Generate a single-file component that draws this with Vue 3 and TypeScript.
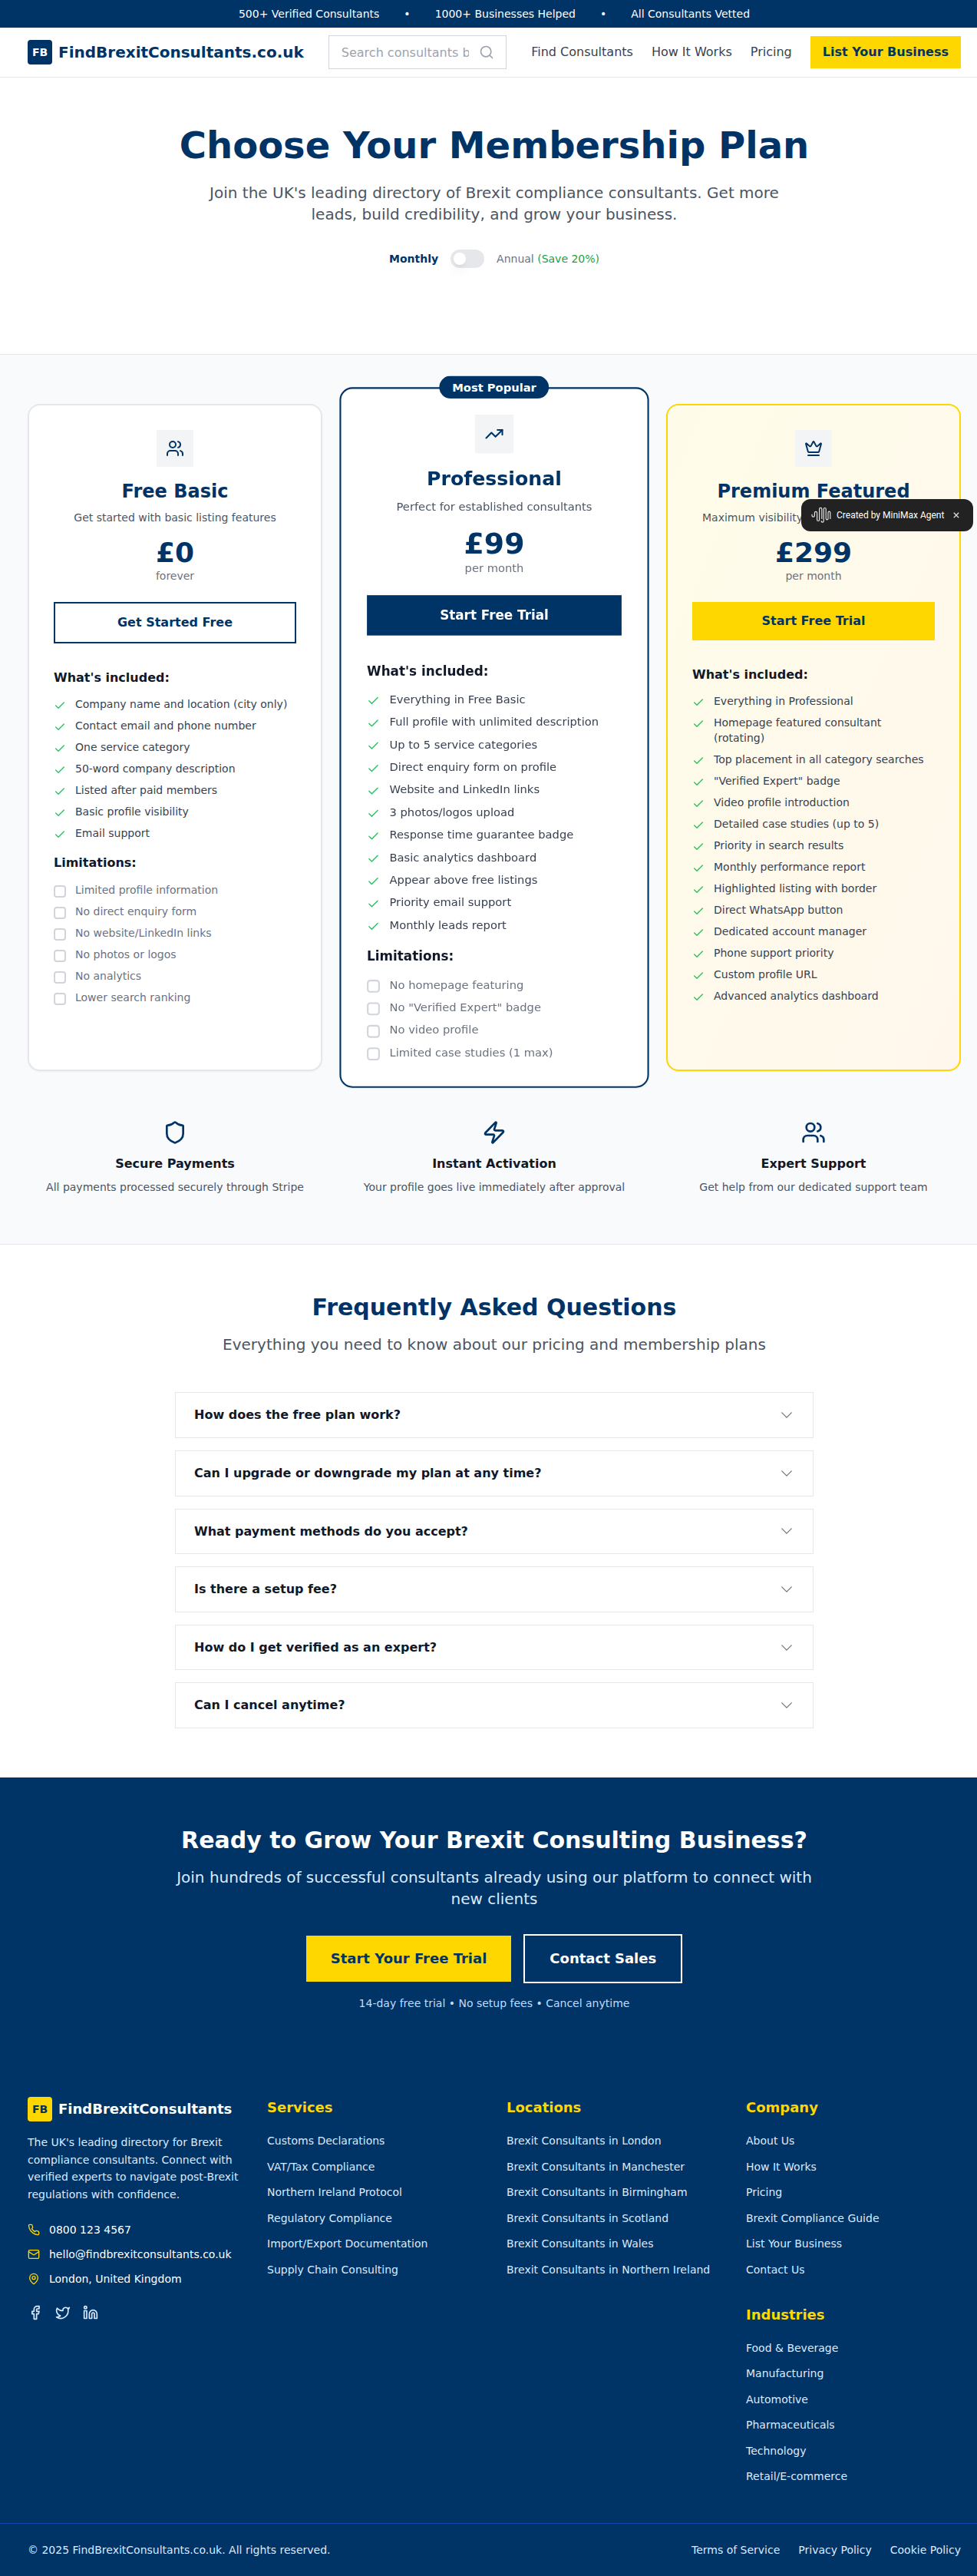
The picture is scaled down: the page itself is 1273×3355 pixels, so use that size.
<script setup lang="ts">
import { ref } from 'vue'

interface Plan {
  name: string
  tagline: string
  price: string
  period: string
  cta: string
  variant: 'basic' | 'pro' | 'premium'
  icon: string
  features: string[]
  limits: string[]
}

const icons: Record<string, string[]> = {
  search: ['M3 11a8 8 0 1 0 16 0a8 8 0 1 0-16 0', 'm21 21-4.3-4.3'],
  users: [
    'M16 21v-2a4 4 0 0 0-4-4H6a4 4 0 0 0-4 4v2',
    'M5 7a4 4 0 1 0 8 0a4 4 0 1 0-8 0',
    'M22 21v-2a4 4 0 0 0-3-3.87',
    'M16 3.13a4 4 0 0 1 0 7.75',
  ],
  trending: ['M22 7l-8.5 8.5-5-5L2 17', 'M16 7h6v6'],
  crown: [
    'M11.562 3.266a.5.5 0 0 1 .876 0L15.39 8.87a1 1 0 0 0 1.516.294L21.183 5.5a.5.5 0 0 1 .798.519l-2.834 10.246a1 1 0 0 1-.956.734H5.81a1 1 0 0 1-.957-.734L2.02 6.02a.5.5 0 0 1 .798-.519l4.276 3.664a1 1 0 0 0 1.516-.294z',
    'M5 21h14',
  ],
  check: ['M20 6 9 17l-5-5'],
  shield: [
    'M20 13c0 5-3.5 7.5-7.66 8.95a1 1 0 0 1-.67-.01C7.5 20.5 4 18 4 13V6a1 1 0 0 1 1-1c2 0 4.5-1.2 6.24-2.72a1.17 1.17 0 0 1 1.52 0C14.51 3.81 17 5 19 5a1 1 0 0 1 1 1z',
  ],
  zap: [
    'M4 14a1 1 0 0 1-.78-1.63l9.9-10.2a.5.5 0 0 1 .86.46l-1.92 6.02A1 1 0 0 0 13 10h7a1 1 0 0 1 .78 1.63l-9.9 10.2a.5.5 0 0 1-.86-.46l1.92-6.02A1 1 0 0 0 11 14z',
  ],
  chevron: ['m19.5 8.25-7.5 7.5-7.5-7.5'],
  phone: [
    'M22 16.92v3a2 2 0 0 1-2.18 2 19.79 19.79 0 0 1-8.63-3.07 19.5 19.5 0 0 1-6-6 19.79 19.79 0 0 1-3.07-8.67A2 2 0 0 1 4.11 2h3a2 2 0 0 1 2 1.72 12.84 12.84 0 0 0 .7 2.81 2 2 0 0 1-.45 2.11L8.09 9.91a16 16 0 0 0 6 6l1.27-1.27a2 2 0 0 1 2.11-.45 12.84 12.84 0 0 0 2.81.7A2 2 0 0 1 22 16.92z',
  ],
  mail: [
    'M4 4h16a2 2 0 0 1 2 2v12a2 2 0 0 1-2 2H4a2 2 0 0 1-2-2V6a2 2 0 0 1 2-2z',
    'm22 7-8.97 5.7a1.94 1.94 0 0 1-2.06 0L2 7',
  ],
  pin: [
    'M20 10c0 4.993-5.539 10.193-7.399 11.799a1 1 0 0 1-1.202 0C9.539 20.193 4 14.993 4 10a8 8 0 0 1 16 0',
    'M9 10a3 3 0 1 0 6 0a3 3 0 1 0-6 0',
  ],
  facebook: ['M18 2h-3a5 5 0 0 0-5 5v3H7v4h3v8h4v-8h3l1-4h-4V7a1 1 0 0 1 1-1h3z'],
  twitter: [
    'M22 4s-.7 2.1-2 3.4c1.6 10-9.4 17.3-18 11.6 2.2.1 4.4-.6 6-2C3 15.5.5 9.6 3 5c2.2 2.6 5.6 4.1 9 4-.9-4.2 4-6.6 7-3.8 1.1 0 3-1.2 3-1.2z',
  ],
  linkedin: [
    'M16 8a6 6 0 0 1 6 6v7h-4v-7a2 2 0 0 0-2-2 2 2 0 0 0-2 2v7h-4v-7a6 6 0 0 1 6-6z',
    'M2 9h4v12H2z',
    'M2 4a2 2 0 1 0 4 0a2 2 0 1 0-4 0',
  ],
}

const plans: Plan[] = [
  {
    name: 'Free Basic',
    tagline: 'Get started with basic listing features',
    price: '£0',
    period: 'forever',
    cta: 'Get Started Free',
    variant: 'basic',
    icon: 'users',
    features: [
      'Company name and location (city only)',
      'Contact email and phone number',
      'One service category',
      '50-word company description',
      'Listed after paid members',
      'Basic profile visibility',
      'Email support',
    ],
    limits: [
      'Limited profile information',
      'No direct enquiry form',
      'No website/LinkedIn links',
      'No photos or logos',
      'No analytics',
      'Lower search ranking',
    ],
  },
  {
    name: 'Professional',
    tagline: 'Perfect for established consultants',
    price: '£99',
    period: 'per month',
    cta: 'Start Free Trial',
    variant: 'pro',
    icon: 'trending',
    features: [
      'Everything in Free Basic',
      'Full profile with unlimited description',
      'Up to 5 service categories',
      'Direct enquiry form on profile',
      'Website and LinkedIn links',
      '3 photos/logos upload',
      'Response time guarantee badge',
      'Basic analytics dashboard',
      'Appear above free listings',
      'Priority email support',
      'Monthly leads report',
    ],
    limits: [
      'No homepage featuring',
      'No "Verified Expert" badge',
      'No video profile',
      'Limited case studies (1 max)',
    ],
  },
  {
    name: 'Premium Featured',
    tagline: 'Maximum visibility for expert consultants',
    price: '£299',
    period: 'per month',
    cta: 'Start Free Trial',
    variant: 'premium',
    icon: 'crown',
    features: [
      'Everything in Professional',
      'Homepage featured consultant (rotating)',
      'Top placement in all category searches',
      '"Verified Expert" badge',
      'Video profile introduction',
      'Detailed case studies (up to 5)',
      'Priority in search results',
      'Monthly performance report',
      'Highlighted listing with border',
      'Direct WhatsApp button',
      'Dedicated account manager',
      'Phone support priority',
      'Custom profile URL',
      'Advanced analytics dashboard',
    ],
    limits: [],
  },
]

const perks = [
  { icon: 'shield', title: 'Secure Payments', text: 'All payments processed securely through Stripe' },
  { icon: 'zap', title: 'Instant Activation', text: 'Your profile goes live immediately after approval' },
  { icon: 'users', title: 'Expert Support', text: 'Get help from our dedicated support team' },
]

const questions = [
  'How does the free plan work?',
  'Can I upgrade or downgrade my plan at any time?',
  'What payment methods do you accept?',
  'Is there a setup fee?',
  'How do I get verified as an expert?',
  'Can I cancel anytime?',
]

const contacts = [
  { icon: 'phone', text: '0800 123 4567' },
  { icon: 'mail', text: 'hello@findbrexitconsultants.co.uk' },
  { icon: 'pin', text: 'London, United Kingdom' },
]

const footerColumns = [
  [
    {
      title: 'Services',
      links: [
        'Customs Declarations',
        'VAT/Tax Compliance',
        'Northern Ireland Protocol',
        'Regulatory Compliance',
        'Import/Export Documentation',
        'Supply Chain Consulting',
      ],
    },
  ],
  [
    {
      title: 'Locations',
      links: ['London', 'Manchester', 'Birmingham', 'Scotland', 'Wales', 'Northern Ireland'].map(
        (place) => `Brexit Consultants in ${place}`,
      ),
    },
  ],
  [
    {
      title: 'Company',
      links: ['About Us', 'How It Works', 'Pricing', 'Brexit Compliance Guide', 'List Your Business', 'Contact Us'],
    },
    {
      title: 'Industries',
      links: ['Food & Beverage', 'Manufacturing', 'Automotive', 'Pharmaceuticals', 'Technology', 'Retail/E-commerce'],
    },
  ],
]

const annual = ref(false)
const toastOpen = ref(true)
</script>

<template>
  <div class="viewport">
    <div class="page">
      <div class="topbar">
        <span>500+ Verified Consultants</span>
        <span>•</span>
        <span>1000+ Businesses Helped</span>
        <span>•</span>
        <span>All Consultants Vetted</span>
      </div>

      <header class="header">
        <div class="container header-row">
          <a class="logo">
            <span class="logo-mark">FB</span>
            <span class="logo-name">FindBrexitConsultants.co.uk</span>
          </a>
          <div class="search">
            <input type="text" placeholder="Search consultants by service, location..." />
            <svg class="ico s20" viewBox="0 0 24 24"><path v-for="d in icons.search" :key="d" :d="d" /></svg>
          </div>
          <nav class="nav">
            <a>Find Consultants</a>
            <a>How It Works</a>
            <a>Pricing</a>
            <a class="nav-cta">List Your Business</a>
          </nav>
        </div>
      </header>

      <section class="hero">
        <h1>Choose Your Membership Plan</h1>
        <p>
          Join the UK's leading directory of Brexit compliance consultants. Get more leads, build credibility, and grow
          your business.
        </p>
        <div class="billing">
          <span :class="{ active: !annual }">Monthly</span>
          <button class="toggle" :class="{ on: annual }" aria-label="Billing period" @click="annual = !annual">
            <i></i>
          </button>
          <span :class="{ active: annual }">Annual <em>(Save 20%)</em></span>
        </div>
      </section>

      <section class="pricing">
        <div class="container">
          <div class="grid3">
            <article v-for="plan in plans" :key="plan.name" class="card" :class="plan.variant">
              <div v-if="plan.variant === 'pro'" class="badge">Most Popular</div>
              <div class="card-head">
                <div class="card-icon">
                  <svg class="ico s24" viewBox="0 0 24 24"><path v-for="d in icons[plan.icon]" :key="d" :d="d" /></svg>
                </div>
                <h3>{{ plan.name }}</h3>
                <p class="tagline">{{ plan.tagline }}</p>
                <div class="price">{{ plan.price }}</div>
                <div class="period">{{ plan.period }}</div>
              </div>
              <button class="card-cta">{{ plan.cta }}</button>
              <h4>What's included:</h4>
              <ul class="list">
                <li v-for="f in plan.features" :key="f">
                  <svg class="ico s16 tick" viewBox="0 0 24 24"><path :d="icons.check[0]" /></svg>
                  <span>{{ f }}</span>
                </li>
              </ul>
              <template v-if="plan.limits.length">
                <h4 class="limits-title">Limitations:</h4>
                <ul class="list limits">
                  <li v-for="l in plan.limits" :key="l">
                    <i class="box"></i>
                    <span>{{ l }}</span>
                  </li>
                </ul>
              </template>
            </article>
          </div>

          <div class="grid3 perks">
            <div v-for="perk in perks" :key="perk.title" class="perk">
              <svg class="ico s32" viewBox="0 0 24 24"><path v-for="d in icons[perk.icon]" :key="d" :d="d" /></svg>
              <h4>{{ perk.title }}</h4>
              <p>{{ perk.text }}</p>
            </div>
          </div>
        </div>
      </section>

      <section class="faq">
        <h2>Frequently Asked Questions</h2>
        <p class="faq-lead">Everything you need to know about our pricing and membership plans</p>
        <div class="faq-list">
          <button v-for="q in questions" :key="q" class="faq-item">
            <span>{{ q }}</span>
            <svg class="ico s20" viewBox="0 0 24 24"><path :d="icons.chevron[0]" /></svg>
          </button>
        </div>
      </section>

      <section class="cta">
        <div class="cta-inner">
          <h2>Ready to Grow Your Brexit Consulting Business?</h2>
          <p class="cta-lead">
            Join hundreds of successful consultants already using our platform to connect with new clients
          </p>
          <div class="cta-buttons">
            <button class="btn-yellow">Start Your Free Trial</button>
            <button class="btn-outline">Contact Sales</button>
          </div>
          <p class="cta-note">14-day free trial • No setup fees • Cancel anytime</p>
        </div>
      </section>

      <footer class="footer">
        <div class="container footer-grid">
          <div>
            <div class="footer-logo">
              <span class="logo-mark yellow">FB</span>
              <span>FindBrexitConsultants</span>
            </div>
            <p class="about">
              The UK's leading directory for Brexit compliance consultants. Connect with verified experts to navigate
              post-Brexit regulations with confidence.
            </p>
            <ul class="contacts">
              <li v-for="c in contacts" :key="c.text">
                <svg class="ico s16" viewBox="0 0 24 24"><path v-for="d in icons[c.icon]" :key="d" :d="d" /></svg>
                <span>{{ c.text }}</span>
              </li>
            </ul>
            <div class="social">
              <svg v-for="s in ['facebook', 'twitter', 'linkedin']" :key="s" class="ico s20" viewBox="0 0 24 24">
                <path v-for="d in icons[s]" :key="d" :d="d" />
              </svg>
            </div>
          </div>
          <div v-for="(column, i) in footerColumns" :key="i" class="footer-col">
            <div v-for="group in column" :key="group.title">
              <h3>{{ group.title }}</h3>
              <ul>
                <li v-for="link in group.links" :key="link"><a>{{ link }}</a></li>
              </ul>
            </div>
          </div>
        </div>
        <div class="legal">
          <div class="container legal-row">
            <span>© 2025 FindBrexitConsultants.co.uk. All rights reserved.</span>
            <div class="legal-links">
              <a>Terms of Service</a>
              <a>Privacy Policy</a>
              <a>Cookie Policy</a>
            </div>
          </div>
        </div>
      </footer>

      <div v-if="toastOpen" class="toast">
        <svg class="wave" width="26" height="22" viewBox="0 0 26 22">
          <path
            d="M1 10.2v1.3a1.7 1.7 0 0 0 3.4 0V8a1.6 1.6 0 0 1 3.2 0v9a1.5 1.5 0 0 0 3 0V3a1.6 1.6 0 0 1 3.2 0v12.5M13.2 18.5a1.5 1.5 0 0 0 3 .3V3a1.5 1.5 0 0 1 3 0v12.5a1.4 1.4 0 0 0 2.8 0V7.5a1.4 1.4 0 0 1 2.8 0v8"
          />
        </svg>
        <span>Created by MiniMax Agent</span>
        <button aria-label="Close" @click="toastOpen = false">
          <svg width="8" height="8" viewBox="0 0 8 8"><path d="M.8.8l6.4 6.4M7.2.8L.8 7.2" /></svg>
        </button>
      </div>
    </div>
  </div>
</template>

<style>
html,
body {
  margin: 0;
  overflow: hidden;
  background: #fff;
}
</style>

<style scoped>
.viewport {
  width: 100%;
  overflow: hidden;
}
.page,
.page * {
  box-sizing: border-box;
}
.page {
  position: relative;
  width: 1288px;
  font-family: 'DejaVu Sans', sans-serif;
  font-size: 16px;
  line-height: 1.6;
  color: #111827;
  background: #fff;
}
h1,
h2,
h3,
h4,
p,
ul {
  margin: 0;
  padding: 0;
  list-style: none;
}
button,
input {
  font: inherit;
  color: inherit;
  border: 0;
  margin: 0;
  padding: 0;
  border-radius: 0;
  background: none;
}
.container {
  max-width: 1280px;
  margin: 0 auto;
  padding: 0 32px;
}
.ico {
  display: block;
  flex: none;
  fill: none;
  stroke: currentColor;
  stroke-width: 2;
  stroke-linecap: round;
  stroke-linejoin: round;
}
.s16 {
  width: 16px;
  height: 16px;
}
.s20 {
  width: 20px;
  height: 20px;
}
.s24 {
  width: 24px;
  height: 24px;
}
.s32 {
  width: 32px;
  height: 32px;
}

.topbar {
  display: flex;
  justify-content: center;
  gap: 32px;
  padding: 8px 0;
  background: #003366;
  color: #fff;
  font-size: 14px;
  line-height: 20px;
}

.header {
  border-bottom: 1px solid #e5e7eb;
}
.header-row {
  display: flex;
  align-items: center;
  height: 64px;
}
.logo {
  display: flex;
  align-items: center;
  gap: 8px;
}
.logo-mark {
  display: flex;
  align-items: center;
  justify-content: center;
  width: 32px;
  height: 32px;
  border-radius: 4px;
  background: #003366;
  color: #fff;
  font-size: 14px;
  line-height: 20px;
  font-weight: 700;
}
.logo-mark.yellow {
  background: #ffd700;
  color: #003366;
}
.logo-name {
  font-size: 20px;
  line-height: 28px;
  font-weight: 700;
  color: #003366;
}
.search {
  position: relative;
  flex: 1;
  min-width: 0;
  margin: 0 32px;
}
.search input {
  display: block;
  width: 100%;
  height: 43.6px;
  padding: 8px 48px 8px 16px;
  border: 1px solid #d1d5db;
}
.search input::placeholder {
  color: #9ca3af;
  opacity: 1;
}
.search svg {
  position: absolute;
  right: 16px;
  top: 12px;
  color: #9ca3af;
}
.nav {
  display: flex;
  align-items: center;
  gap: 24px;
  color: #374151;
  white-space: nowrap;
}
.nav-cta {
  padding: 8px 16px;
  background: #ffd700;
  color: #003366;
  font-weight: 600;
}

.hero {
  padding: 64px 0 48px;
  text-align: center;
}
.hero h1 {
  font-size: 48px;
  line-height: 48px;
  font-weight: 700;
  color: #003366;
}
.hero p {
  max-width: 768px;
  margin: 24px auto 32px;
  font-size: 20px;
  line-height: 28px;
  color: #4b5563;
}
.billing {
  display: flex;
  align-items: center;
  justify-content: center;
  gap: 16px;
  margin-bottom: 64px;
  font-size: 14px;
  line-height: 20px;
  color: #6b7280;
}
.billing .active {
  color: #003366;
  font-weight: 600;
}
.billing em {
  font-style: normal;
  color: #16a34a;
}
.toggle {
  width: 44px;
  height: 24px;
  padding: 4px;
  border-radius: 12px;
  background: #e5e7eb;
}
.toggle i {
  display: block;
  width: 16px;
  height: 16px;
  border-radius: 50%;
  background: #fff;
  box-shadow: 0 10px 15px -3px rgba(0, 0, 0, 0.1), 0 4px 6px -4px rgba(0, 0, 0, 0.1);
}
.toggle.on {
  background: #003366;
}
.toggle.on i {
  margin-left: 20px;
}

.pricing {
  padding: 64px 0;
  background: #f9fafb;
  border-top: 1px solid #e5e7eb;
  border-bottom: 1px solid #e5e7eb;
}
.grid3 {
  display: grid;
  grid-template-columns: repeat(3, 1fr);
  gap: 32px;
}
.card {
  position: relative;
  padding: 32px;
  border: 2px solid #e5e7eb;
  border-radius: 16px;
  background: #fff;
  box-shadow: 0 1px 2px rgba(0, 0, 0, 0.05);
}
.card.pro {
  border-color: #003366;
  transform: scale(1.05);
}
.card.premium {
  border-color: #ffd700;
  background: linear-gradient(to bottom right, #fefce8, #fff7ed);
}
.badge {
  position: absolute;
  top: -16px;
  left: 50%;
  transform: translateX(-50%);
  padding: 4px 16px;
  border-radius: 14px;
  background: #003366;
  color: #fff;
  font-size: 14px;
  line-height: 20px;
  font-weight: 600;
  white-space: nowrap;
}
.card-head {
  text-align: center;
  margin-bottom: 24px;
}
.card-icon {
  display: flex;
  align-items: center;
  justify-content: center;
  width: 48px;
  height: 48px;
  margin: 0 auto 16px;
  background: #f3f4f6;
  color: #003366;
}
.card h3 {
  font-size: 24px;
  line-height: 32px;
  font-weight: 700;
  color: #003366;
}
.tagline {
  margin: 8px 0 16px;
  font-size: 14px;
  line-height: 20px;
  color: #4b5563;
  white-space: nowrap;
}
.price {
  font-size: 36px;
  line-height: 40px;
  font-weight: 700;
  color: #003366;
}
.period {
  font-size: 14px;
  line-height: 20px;
  color: #6b7280;
}
.card-cta {
  display: block;
  width: 100%;
  margin-bottom: 32px;
  padding: 12px 24px;
  font-weight: 600;
  text-align: center;
}
.basic .card-cta {
  border: 2px solid #003366;
  background: #fff;
  color: #003366;
}
.pro .card-cta {
  background: #003366;
  color: #fff;
}
.premium .card-cta {
  background: #ffd700;
  color: #003366;
}
.card h4 {
  margin-bottom: 12px;
  font-size: 16px;
  font-weight: 600;
}
.card h4.limits-title {
  margin-top: 16px;
}
.list {
  display: flex;
  flex-direction: column;
  gap: 8px;
  font-size: 14px;
  line-height: 20px;
  color: #374151;
}
.list li {
  display: flex;
  align-items: flex-start;
  gap: 12px;
}
.list.limits {
  color: #6b7280;
}
.tick {
  margin-top: 4px;
  color: #22c55e;
}
.box {
  flex: none;
  width: 16px;
  height: 16px;
  margin-top: 4px;
  border: 2px solid #d1d5db;
  border-radius: 4px;
}
.perks {
  margin-top: 64px;
}
.perk {
  text-align: center;
}
.perk svg {
  margin: 0 auto 12px;
  color: #003366;
}
.perk h4 {
  margin-bottom: 8px;
  font-size: 16px;
  font-weight: 600;
}
.perk p {
  font-size: 14px;
  line-height: 20px;
  color: #4b5563;
}

.faq {
  max-width: 896px;
  margin: 0 auto;
  padding: 64px 32px;
  text-align: center;
}
.faq h2 {
  font-size: 30px;
  line-height: 36px;
  font-weight: 700;
  color: #003366;
}
.faq-lead {
  margin: 16px 0 48px;
  font-size: 20px;
  line-height: 28px;
  color: #4b5563;
}
.faq-list {
  display: flex;
  flex-direction: column;
  gap: 16px;
}
.faq-item {
  display: flex;
  align-items: center;
  justify-content: space-between;
  padding: 16px 24px;
  border: 1px solid #e5e7eb;
  font-weight: 600;
  color: #111827;
}
.faq-item svg {
  color: #6b7280;
  stroke-width: 1.5;
}

.cta {
  padding: 64px 0;
  background: #003366;
  color: #fff;
}
.cta-inner {
  max-width: 896px;
  margin: 0 auto;
  padding: 0 32px;
  text-align: center;
}
.cta h2 {
  font-size: 30px;
  line-height: 36px;
  font-weight: 700;
}
.cta-lead {
  margin: 16px 0 32px;
  font-size: 20px;
  line-height: 28px;
  color: #dbeafe;
}
.cta-buttons {
  display: flex;
  align-items: center;
  justify-content: center;
  gap: 16px;
  font-size: 18px;
  line-height: 28px;
  font-weight: 600;
}
.cta-buttons button {
  padding: 16px 32px;
}
.btn-yellow {
  background: #ffd700;
  color: #003366;
}
.cta-buttons .btn-outline {
  border: 2px solid #fff;
}
.cta-note {
  margin-top: 16px;
  font-size: 14px;
  line-height: 20px;
  color: #bfdbfe;
}

.footer {
  background: #003366;
  color: #fff;
}
.footer-grid {
  display: grid;
  grid-template-columns: repeat(4, 1fr);
  gap: 32px;
  padding-top: 48px;
  padding-bottom: 48px;
}
.footer-logo {
  display: flex;
  align-items: center;
  gap: 8px;
  font-size: 18px;
  line-height: 28px;
  font-weight: 700;
}
.about {
  margin: 16px 0 24px;
  font-size: 14px;
  line-height: 1.625;
  color: #dbeafe;
}
.contacts {
  display: flex;
  flex-direction: column;
  gap: 12px;
  font-size: 14px;
  line-height: 20px;
}
.contacts li {
  display: flex;
  align-items: center;
  gap: 12px;
}
.contacts svg {
  color: #ffd700;
}
.social {
  display: flex;
  gap: 16px;
  margin-top: 24px;
  color: #dbeafe;
}
.footer-col {
  display: flex;
  flex-direction: column;
  gap: 32px;
}
.footer-col h3 {
  margin-bottom: 16px;
  font-size: 18px;
  line-height: 28px;
  font-weight: 600;
  color: #ffd700;
}
.footer-col ul {
  display: flex;
  flex-direction: column;
  gap: 8px;
}
.footer-col a {
  font-size: 14px;
  line-height: 20px;
  color: #dbeafe;
}
.legal {
  border-top: 1px solid #1e40af;
}
.legal-row {
  display: flex;
  align-items: center;
  justify-content: space-between;
  padding-top: 24px;
  padding-bottom: 24px;
  font-size: 14px;
  line-height: 20px;
  color: #dbeafe;
}
.legal-links {
  display: flex;
  gap: 24px;
}

.toast {
  position: absolute;
  top: 650px;
  right: 20px;
  display: flex;
  align-items: center;
  width: 224px;
  height: 42px;
  padding: 0 18px 0 13px;
  border-radius: 12px;
  background: #222;
  color: #fff;
  font-family: Roboto, sans-serif;
  font-size: 12px;
  line-height: 16px;
  white-space: nowrap;
}
.wave {
  flex: none;
  margin-right: 7px;
  fill: none;
  stroke: #e5e5e5;
  stroke-width: 1.2;
  stroke-linecap: round;
}
.toast button {
  display: flex;
  margin-left: auto;
}
.toast button path {
  fill: none;
  stroke: #d4d4d4;
  stroke-width: 1.4;
}
</style>
